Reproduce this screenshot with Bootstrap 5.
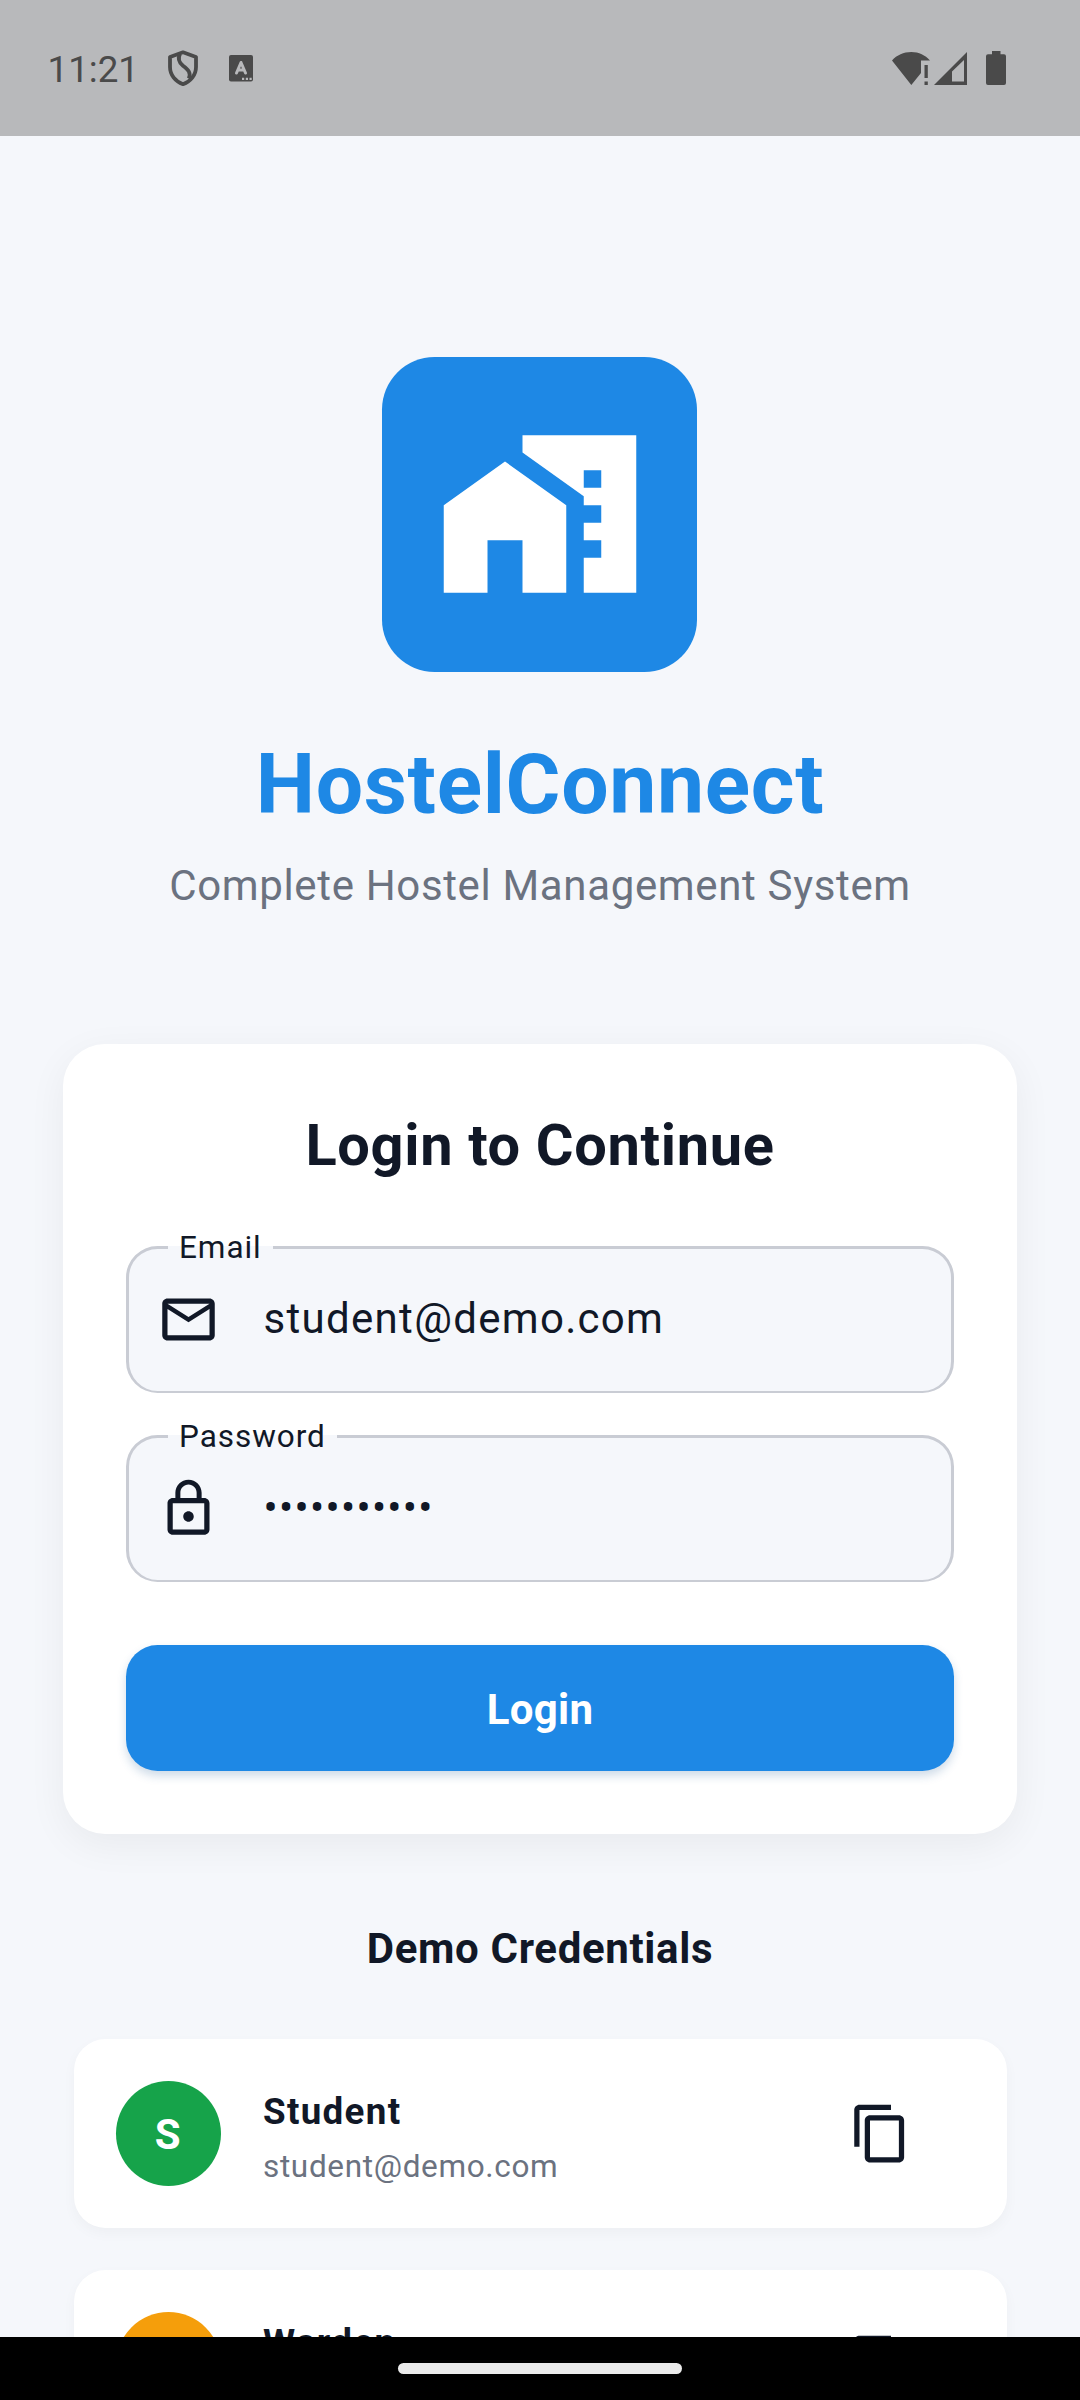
<!DOCTYPE html>
<html lang="en">
<head>
<meta charset="utf-8">
<meta name="viewport" content="width=device-width, initial-scale=1">
<title>HostelConnect</title>
<link rel="stylesheet" href="https://cdn.jsdelivr.net/npm/bootstrap@5.3.0/dist/css/bootstrap.min.css">
<style>
  :root { --brand: #1e88e5; --ink: #111827; --muted: #6b7280; --page: #f5f7fb; }
  body { font-family: Roboto, "Liberation Sans", sans-serif; background: var(--page); color: var(--ink); letter-spacing: .656px; }
  svg { display: block; flex: none; }
  .phone { width: 1080px; height: 2400px; }
  .status-bar { height: 136px; background: #b8b9bb; color: #4a4a4a; padding: 0 74px 0 47.5px; }
  .clock { font-size: 36.75px; line-height: 44px; letter-spacing: 0; width: 120.5px; padding-top: 4px; }
  .input-badge { margin-left: 31px; }
  .battery { margin-left: 19px; }
  .screen { padding-top: 221px; min-height: 0; }
  .logo { width: 315px; height: 315px; border-radius: 52.5px; background: var(--brand); color: #fff; margin-right: 1px; padding: 0 0 1.5px 1px; }
  .app-name { font-size: 84px; line-height: 120px; color: var(--brand); margin: 53px 0 11px; }
  .tagline { font-size: 42px; line-height: 60px; color: var(--muted); margin-bottom: 128px; }
  .login-card { width: 954px; height: 790px; border: 0; border-radius: 42px; padding: 63px; box-shadow: 0 10.5px 39px rgba(0,0,0,.055); }
  .login-title { font-size: 57.75px; line-height: 77px; margin-bottom: 62px; }
  .field { height: 147px; border: solid #c9ccd4; border-width: 3px 3px 2px; border-radius: 31.5px; background: var(--page); margin-bottom: 42px; padding: 0 0 2px 28px; }
  .field-label { position: absolute; left: 39px; top: -23px; padding: 0 11.5px 0 11px; font-size: 31.5px; line-height: 44px; letter-spacing: .95px; background: linear-gradient(var(--page), var(--page)) 0 20px / 100% 4px no-repeat; }
  .field-value { font-size: 42px; line-height: 60px; letter-spacing: 1.3125px; margin-left: 43.5px; }
  .login-btn { height: 126px; margin-top: 21px; padding: 8px 0 6px; border: 0; border-radius: 31.5px; background: var(--brand); font-size: 42px; letter-spacing: .2625px; box-shadow: 0 5px 10px rgba(30,90,150,.22); }
  .section-title { font-size: 42px; line-height: 60px; margin: 85px 0 60px; }
  .cred { width: 933px; height: 189px; flex: none; border: 0; border-radius: 31.5px; padding: 0 94.5px 0 42px; margin-bottom: 42px; box-shadow: 0 5px 14px rgba(0,0,0,.035); }
  .avatar { width: 105px; height: 105px; font-size: 42px; letter-spacing: .39px; color: #fff; padding-top: 1px; }
  .avatar-student { background: #16a34a; }
  .avatar-warden { background: #f59e0b; }
  .cred-text { margin-left: 42.5px; padding-top: 6px; }
  .cred-name { font-size: 36.75px; line-height: 55px; letter-spacing: 1.3125px; }
  .cred-mail { font-size: 31.5px; line-height: 45px; min-height: 45px; letter-spacing: .656px; color: var(--muted); margin-top: 5px; }
  .nav-strip { height: 63px; background: #000; }
  .pill { width: 284px; height: 11px; background: #ebebeb; }
</style>
</head>
<body>
<div class="phone d-flex flex-column overflow-hidden">
  <header class="status-bar d-flex align-items-center flex-shrink-0">
    <span class="clock">11:21</span>
    <svg width="30" height="36" viewBox="0 0 30 36" fill="none" stroke="currentColor" stroke-width="3.8" stroke-linejoin="round"><path d="M15 2.3 28 7v10c0 8-5.500 14.500-13 17.200C7.500 31.500 2 25 2 17V7z"/><path d="M12 4c-2.500 4.500-1.500 8 3 11.800 5.500 4.200 8.300 7 5.800 12.700"/></svg>
    <svg class="input-badge me-auto" width="24" height="27" viewBox="0 0 24 27"><rect width="24" height="26.500" rx="2" fill="currentColor"/><path d="M7.500 18 12 7.500 16.500 18M9 15h6" fill="none" stroke="#b8b9bb" stroke-width="3" stroke-linecap="round" stroke-linejoin="round"/><path d="M13 22.800h2.200v2.200H13zm3.800 0H19v2.200h-2.200zm3.700 0h2.200v2.200h-2.200z" fill="#b8b9bb"/></svg>
    <svg width="38" height="34" viewBox="0 0 38 34" fill="currentColor"><path d="M0 9.500C5 4 11.500 1 19.300 1S33 4 38 9.500H29V22l-9.700 12z"/><path d="M32.500 14h3.300v13h-3.300zm0 16.500h3.300V34h-3.300z"/></svg>
    <svg class="ms-1" width="33" height="33" viewBox="0 0 33 33" fill="currentColor"><path fill-rule="evenodd" d="M33 0v33H0zM30 8 18 19.500V29.500H30z"/></svg>
    <svg class="battery" width="20" height="34" viewBox="0 0 20 34" fill="currentColor"><path d="M6 0h8.500v3.300H18q2 0 2 2V32q0 2-2 2H2q-2 0-2-2V5.300q0-2 2-2h4z"/></svg>
  </header>

  <main class="screen flex-grow-1 overflow-hidden d-flex flex-column align-items-center">
    <div class="logo d-flex align-items-center justify-content-center flex-shrink-0">
      <svg width="210" height="210" viewBox="0 0 24 24" fill="currentColor"><path d="M1 11v10h5v-6h4v6h5V11L8 6z"/><path d="M10 3v1.970l7 5V11h2v2h-2v2h2v2h-2v4h6V3zm9 6h-2V7h2z"/></svg>
    </div>
    <h1 class="app-name fw-bold">HostelConnect</h1>
    <p class="tagline">Complete Hostel Management System</p>

    <section class="login-card card flex-shrink-0">
      <h2 class="login-title fw-bold text-center">Login to Continue</h2>
      <div class="field position-relative d-flex align-items-center">
        <span class="field-label">Email</span>
        <svg width="63" height="63" viewBox="0 0 24 24" fill="currentColor"><path d="M22 6c0-1.100-.9-2-2-2H4c-1.100 0-2 .9-2 2v12c0 1.100.9 2 2 2h16c1.100 0 2-.9 2-2V6zm-2 0-8 5-8-5h16zm0 12H4V8l8 5 8-5v10z"/></svg>
        <span class="field-value">student@demo.com</span>
      </div>
      <div class="field position-relative d-flex align-items-center">
        <span class="field-label">Password</span>
        <svg width="63" height="63" viewBox="0 0 24 24" fill="currentColor"><path d="M12 17c1.100 0 2-.9 2-2s-.9-2-2-2-2 .9-2 2 .9 2 2 2zm6-9h-1V6c0-2.760-2.240-5-5-5S7 3.240 7 6v2H6c-1.100 0-2 .9-2 2v10c0 1.100.9 2 2 2h12c1.100 0 2-.9 2-2V10c0-1.100-.9-2-2-2zM8.900 6c0-1.710 1.390-3.100 3.100-3.100s3.100 1.390 3.100 3.100v2H8.900V6zM18 20H6V10h12v10z"/></svg>
        <span class="field-value">•••••••••••</span>
      </div>
      <button type="button" class="login-btn btn btn-primary w-100 fw-bold">Login</button>
    </section>

    <h3 class="section-title fw-bold">Demo Credentials</h3>

    <article class="cred card flex-row align-items-center">
      <div class="avatar avatar-student rounded-circle d-flex align-items-center justify-content-center fw-bold">S</div>
      <div class="cred-text flex-grow-1">
        <div class="cred-name fw-bold">Student</div>
        <div class="cred-mail">student@demo.com</div>
      </div>
      <svg width="63" height="63" viewBox="0 0 24 24" fill="currentColor"><path d="M16 1H4c-1.100 0-2 .9-2 2v14h2V3h12V1zm3 4H8c-1.100 0-2 .9-2 2v14c0 1.100.9 2 2 2h11c1.100 0 2-.9 2-2V7c0-1.100-.9-2-2-2zm0 16H8V7h11v14z"/></svg>
    </article>
    <article class="cred card flex-row align-items-center">
      <div class="avatar avatar-warden rounded-circle"></div>
      <div class="cred-text flex-grow-1">
        <div class="cred-name fw-bold">Warden</div>
        <div class="cred-mail"></div>
      </div>
      <svg width="63" height="63" viewBox="0 0 24 24" fill="currentColor"><path d="M16 1H4c-1.100 0-2 .9-2 2v14h2V3h12V1zm3 4H8c-1.100 0-2 .9-2 2v14c0 1.100.9 2 2 2h11c1.100 0 2-.9 2-2V7c0-1.100-.9-2-2-2zm0 16H8V7h11v14z"/></svg>
    </article>
  </main>

  <footer class="nav-strip d-flex align-items-center justify-content-center flex-shrink-0">
    <div class="pill rounded-pill"></div>
  </footer>
</div>
<script src="https://cdn.jsdelivr.net/npm/bootstrap@5.3.0/dist/js/bootstrap.bundle.min.js"></script>
</body>
</html>
